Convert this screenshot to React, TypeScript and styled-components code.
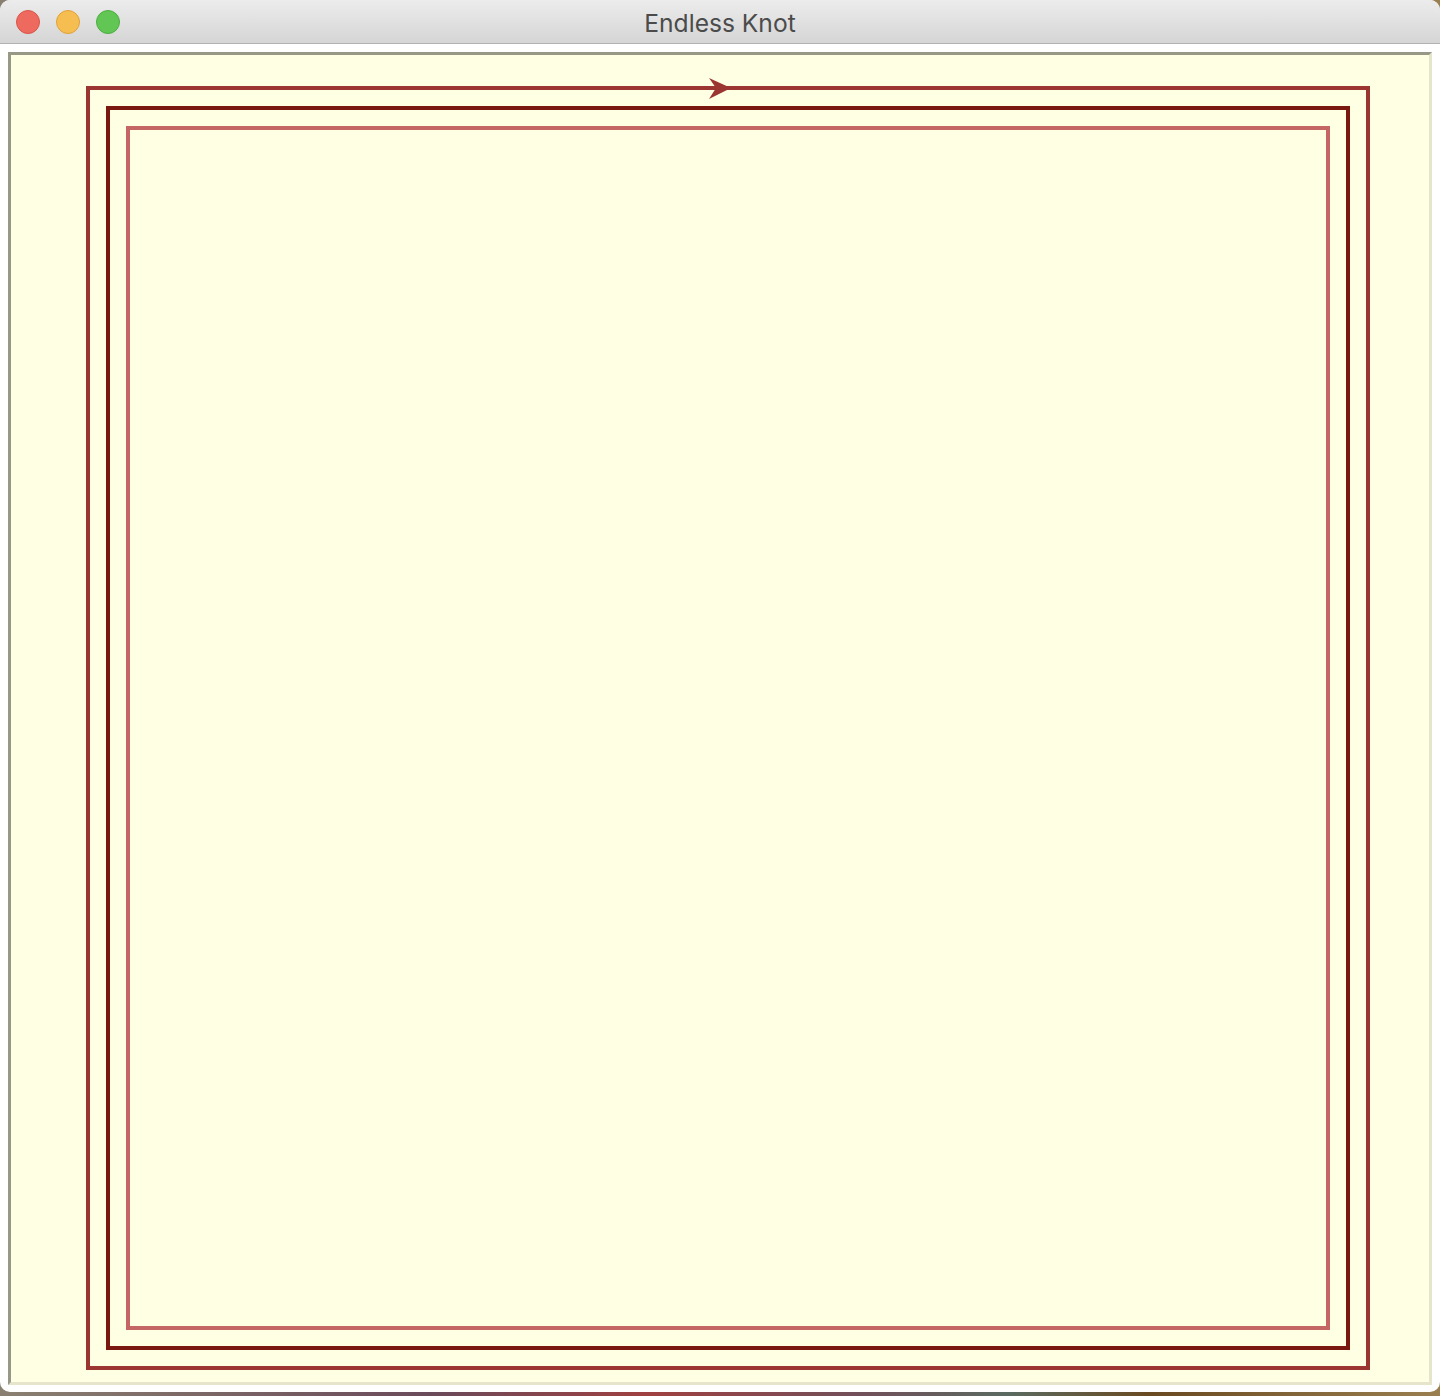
import React from "react";
import styled, { createGlobalStyle } from "styled-components";

const Global = createGlobalStyle`
  html, body { margin: 0; padding: 0; }
  body {
    width: 1440px;
    height: 1396px;
    overflow: hidden;
    background: linear-gradient(90deg, #8a8070 0%, #6a4a5a 30%, #a04040 45%, #70505a 60%, #5a6a60 70%, #6a4a20 80%, #9a8050 100%);
    font-family: "Inter", "Liberation Sans", sans-serif;
  }
`;

const Window = styled.div`
  width: 1440px;
  height: 1392px;
  background: #ffffff;
  border-radius: 10px;
  display: flex;
  flex-direction: column;
  overflow: hidden;
`;

const TitleBar = styled.div`
  height: 43px;
  flex: 0 0 43px;
  background: linear-gradient(#ececec, #d5d5d5);
  border-bottom: 1px solid #b2b2b2;
  display: flex;
  align-items: center;
  position: relative;
`;

const Lights = styled.div`
  display: flex;
  gap: 16px;
  padding-left: 16px;
  position: absolute;
  left: 0;
  top: 10px;
`;

const Light = styled.div<{ $fill: string; $edge: string }>`
  width: 24px;
  height: 24px;
  border-radius: 50%;
  background: ${(p) => p.$fill};
  border: 1px solid ${(p) => p.$edge};
  box-sizing: border-box;
`;

const Title = styled.div`
  flex: 1;
  text-align: center;
  font-size: 24.6px;
  line-height: 30px;
  padding-top: 2px;
  color: #4b4b4b;
  padding-left: 0px;
`;

const Body = styled.div`
  flex: 1;
  padding: 8px 8px 7px 8px;
  display: flex;
`;

const Frame = styled.div`
  flex: 1;
  border-style: solid;
  border-width: 3px;
  border-color: #989886 #e6e4cb #e6e4cb #989886;
  background: #ffffe4;
  overflow: hidden;
`;

const Canvas = styled.svg`
  display: block;
`;

export default function App() {
  return (
    <>
      <Global />
      <Window>
        <TitleBar>
          <Lights>
            <Light $fill="#ee6a5f" $edge="#d8554a" />
            <Light $fill="#f6be50" $edge="#dfa23a" />
            <Light $fill="#62c655" $edge="#4cae40" />
          </Lights>
          <Title>Endless Knot</Title>
        </TitleBar>
        <Body>
          <Frame>
            <Canvas width="1418" height="1327" viewBox="0 0 1418 1327">
              <rect x="77" y="33" width="1280" height="1280" fill="none" stroke="#9b3531" strokeWidth="4" />
              <rect x="97" y="53" width="1240" height="1240" fill="none" stroke="#7a1810" strokeWidth="4" />
              <rect x="117" y="73" width="1200" height="1200" fill="none" stroke="#c46664" strokeWidth="4" />
              <polygon points="698,23 720,33 698,44 705,33" fill="#9b3531" />
            </Canvas>
          </Frame>
        </Body>
      </Window>
    </>
  );
}
